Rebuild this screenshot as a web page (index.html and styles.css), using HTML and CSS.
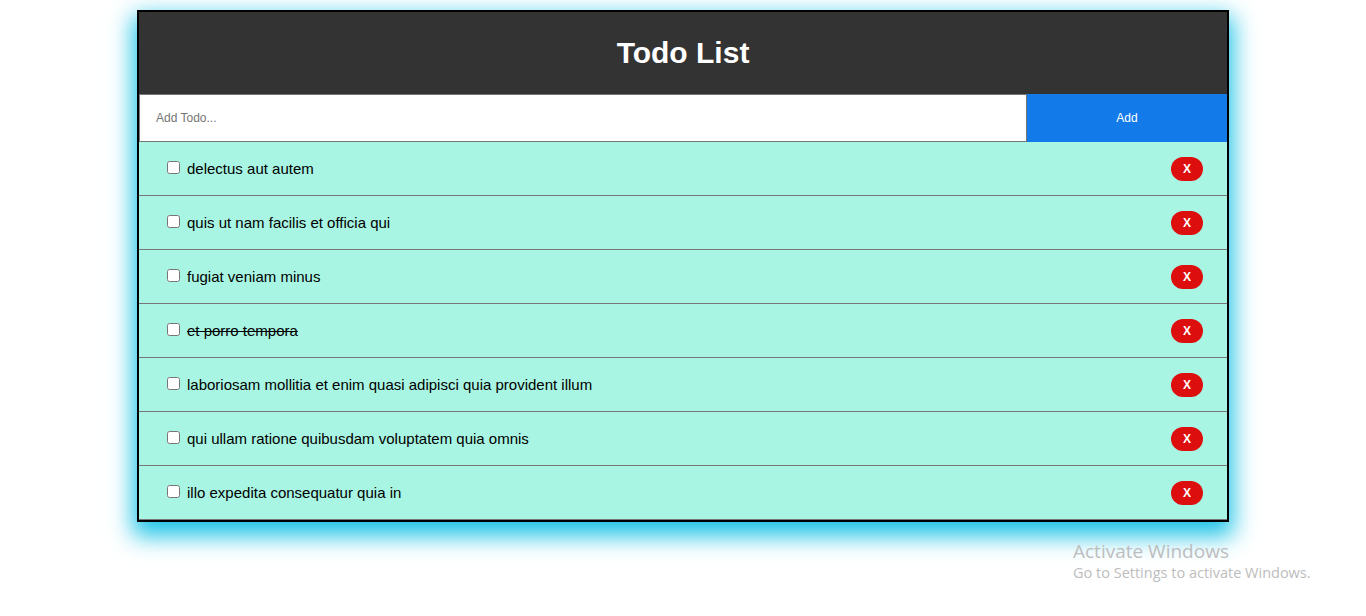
FILE: index.html
```html
<!DOCTYPE html>
<html>
<head>
<meta charset="utf-8">
<title>Todo List</title>
<link rel="stylesheet" href="styles.css">
</head>
<body>
<main class="page">
<div class="app">
  <header class="header"><h1 class="title">Todo List</h1></header>
  <form class="add-form">
    <input class="add-input" type="text" placeholder="Add Todo...">
    <button class="add-btn" type="button">Add</button>
  </form>
  <div class="item"><label class="item-label"><input type="checkbox" class="check"><span>delectus aut autem</span></label><button class="del" type="button">X</button></div>
  <div class="item"><label class="item-label"><input type="checkbox" class="check"><span>quis ut nam facilis et officia qui</span></label><button class="del" type="button">X</button></div>
  <div class="item"><label class="item-label"><input type="checkbox" class="check"><span>fugiat veniam minus</span></label><button class="del" type="button">X</button></div>
  <div class="item"><label class="item-label"><input type="checkbox" class="check"><span class="done">et porro tempora</span></label><button class="del" type="button">X</button></div>
  <div class="item"><label class="item-label"><input type="checkbox" class="check"><span>laboriosam mollitia et enim quasi adipisci quia provident illum</span></label><button class="del" type="button">X</button></div>
  <div class="item"><label class="item-label"><input type="checkbox" class="check"><span>qui ullam ratione quibusdam voluptatem quia omnis</span></label><button class="del" type="button">X</button></div>
  <div class="item"><label class="item-label"><input type="checkbox" class="check"><span>illo expedita consequatur quia in</span></label><button class="del" type="button">X</button></div>
</div>
</main>
<div class="watermark">
  <div class="wm-title">Activate Windows</div>
  <div class="wm-sub">Go to Settings to activate Windows.</div>
</div>
</body>
</html>
```
FILE: styles.css
```css
* { box-sizing: border-box; }
html, body { margin: 0; padding: 0; background: #fff; }
body { font-family: "Liberation Sans", Arial, sans-serif; color: #000; min-height: 616px; }

.page {
  padding: 10px 0 80px;
}

.app {
  width: 1092px;
  margin: 0 auto;
  border: 2px solid #000;
  box-shadow: 0 10px 22px 4px #1cc3e6;
  background: #a9f5e3;
}

.header {
  background: #333;
  height: 82px;
  display: flex;
  align-items: center;
  justify-content: center;
}
.title {
  margin: 0;
  color: #fff;
  font-size: 30px;
  font-weight: bold;
  line-height: 1;
}

.add-form {
  display: flex;
  height: 48px;
  margin: 0;
}
.add-input {
  flex: 1;
  border: 1px solid #767676;
  margin: 0;
  padding: 0 16px;
  font-family: "Liberation Sans", Arial, sans-serif;
  font-size: 12px;
  background: #fff;
  outline: none;
}
.add-input::placeholder { color: #757575; }
.add-btn {
  width: 200px;
  border: none;
  margin: 0;
  background: #137be9;
  color: #fff;
  font-family: "Liberation Sans", Arial, sans-serif;
  font-size: 12px;
}

.item {
  height: 54px;
  border-bottom: 1px solid #777;
  display: flex;
  align-items: center;
  justify-content: space-between;
  padding: 0 24px;
  font-size: 15px;
}
.item-label { display: flex; align-items: center; }
.check { margin: 0 7px 2px 4px; width: 13px; height: 13px; }
.done { text-decoration: line-through; }

.del {
  width: 32px;
  height: 24px;
  border: none;
  border-radius: 12px;
  background: #dd0e0e;
  color: #fff;
  font-family: "Liberation Sans", Arial, sans-serif;
  font-weight: bold;
  font-size: 12px;
  padding: 0;
}

.watermark {
  position: absolute;
  left: 1073px;
  top: 540px;
  color: #bdbdbd;
  font-family: "Open Sans", "Noto Sans", sans-serif;
}
.wm-title { font-size: 19px; line-height: 22px; }
.wm-sub { font-size: 14.5px; line-height: 22px; }
```
